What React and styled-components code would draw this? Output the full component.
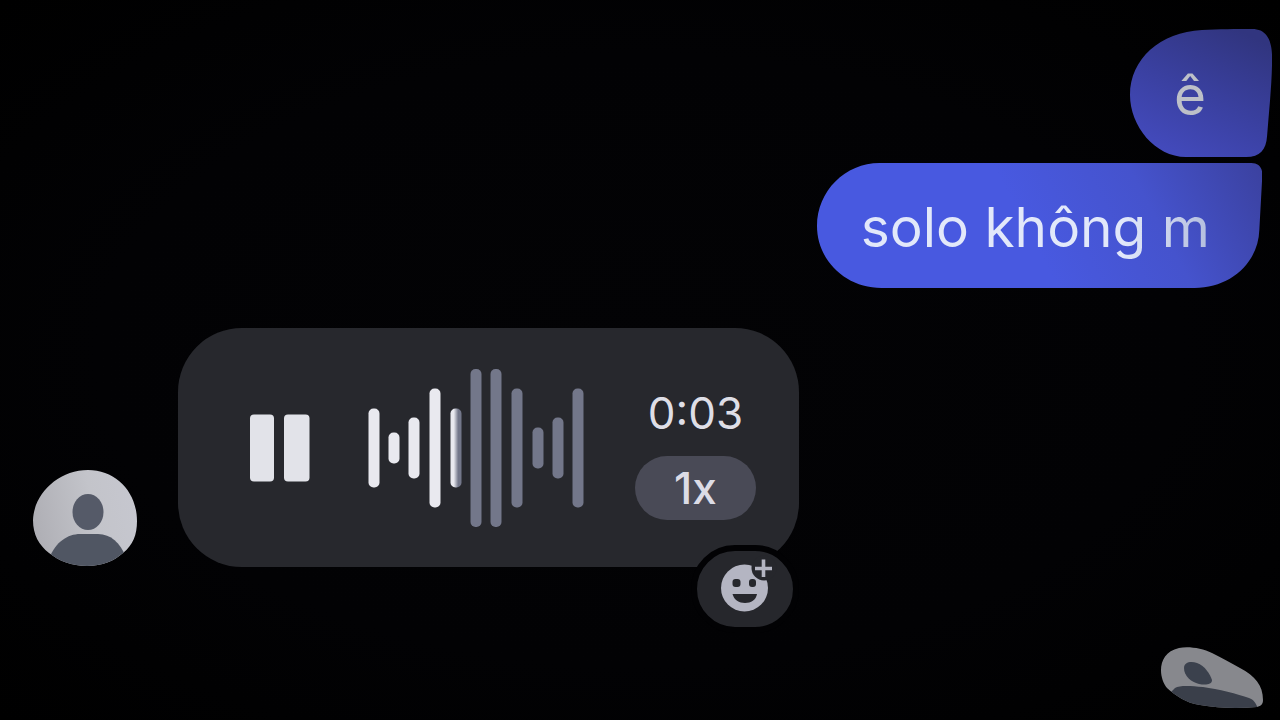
import React from 'react';
import styled, { createGlobalStyle } from 'styled-components';

const GlobalStyle = createGlobalStyle`
  * {
    box-sizing: border-box;
  }
  body {
    margin: 0;
    background: #010102;
    font-family: Inter, "Liberation Sans", sans-serif;
  }
  button {
    border: 0;
    padding: 0;
    font-family: inherit;
    cursor: pointer;
  }
`;

const Thread = styled.main`
  display: flex;
  flex-direction: column;
  min-height: 100vh;
  padding: 28px 8px 8px 32px;
  background: radial-gradient(ellipse at center, #030305 0%, #020204 60%, #000 100%);
`;

const SentGroup = styled.section`
  display: flex;
  flex-direction: column;
  align-items: flex-end;
  gap: 4px;
`;

const Bubble = styled.div`
  position: relative;
  display: flex;
  align-items: center;
  min-height: ${props => props.$height}px;
  margin-right: ${props => props.$inset}px;
  padding: 4px ${props => props.$padRight}px 0 44px;
`;

const BubbleShape = styled.svg`
  position: absolute;
  inset: 0;
  width: 100%;
  height: 100%;
`;

const BubbleText = styled.p`
  position: relative;
  margin: 0;
  font-size: 55px;
  line-height: 68px;
  color: transparent;
  background: ${props => props.$ink};
  background-clip: text;
`;

const ReceivedRow = styled.section`
  display: flex;
  align-items: flex-end;
  gap: 40px;
  margin-top: 40px;
`;

const Avatar = styled.svg`
  display: block;
  flex: none;
`;

const VoiceCard = styled.article`
  position: relative;
  display: flex;
  align-items: center;
  padding: 40px 43px 39px 71px;
  border-radius: 64px;
  background: #27282d;
`;

const PauseButton = styled.button`
  display: flex;
  margin-right: 58px;
  background: none;
`;

const Wave = styled.svg`
  display: block;
  margin-right: 51px;
`;

const Side = styled.div`
  display: flex;
  flex-direction: column;
  align-items: center;
  gap: 15px;
  padding-top: 8px;
`;

const Time = styled.time`
  font-size: 44px;
  line-height: 56px;
  color: #dedee6;
`;

const SpeedButton = styled.button`
  width: 121px;
  height: 64px;
  border-radius: 32px;
  background: #494a56;
  color: #dcdce6;
  font-size: 44px;
  font-weight: 500;
  line-height: 64px;
`;

const ReactButton = styled.button`
  position: absolute;
  right: 0;
  bottom: -66px;
  display: flex;
  width: 108px;
  height: 88px;
  border: 6px solid #020204;
  border-radius: 46px;
  background: #26272c;
`;

const Seen = styled.footer`
  display: flex;
  justify-content: flex-end;
  margin-top: 80px;
  padding-right: 8px;
`;

const bars = [
  { x: 5, h: 79, played: true },
  { x: 25, h: 31, played: true },
  { x: 45, h: 61, played: true },
  { x: 66, h: 119, played: true },
  { x: 87, h: 79, half: true },
  { x: 107, h: 158 },
  { x: 127, h: 158 },
  { x: 148, h: 119 },
  { x: 169, h: 41 },
  { x: 189, h: 61 },
  { x: 209, h: 119 },
];

const barFill = (bar) => {
  if (bar.half) return 'url(#half)';
  return bar.played ? '#e9e9ef' : '#73778a';
};

const WaveForm = () => (
  <Wave width="216" height="160" viewBox="-1 0 216 160" aria-hidden="true">
    <defs>
      <linearGradient id="half">
        <stop offset="0.3" stopColor="#e9e9ef" />
        <stop offset="0.7" stopColor="#73778a" />
      </linearGradient>
    </defs>
    {bars.map(bar => (
      <rect
        key={bar.x}
        x={bar.x - 5.5}
        y={80 - bar.h / 2}
        width="11"
        height={bar.h}
        rx="5"
        fill={barFill(bar)}
      />
    ))}
  </Wave>
);

const App = () => (
  <>
    <GlobalStyle />
    <Thread>
      <SentGroup>
        <Bubble $height={130} $inset={0} $padRight={66}>
          <BubbleShape viewBox="0 0 142 130" preserveAspectRatio="none" aria-hidden="true">
            <defs>
              <linearGradient id="first" x1="0.2" y1="1" x2="0.75" y2="0">
                <stop offset="0" stopColor="#444bbf" />
                <stop offset="0.5" stopColor="#3a40a0" />
                <stop offset="1" stopColor="#31357f" />
              </linearGradient>
            </defs>
            <path
              d="M72 2C88 1 107 1 122 1C136 1 142 11 142 30C142 55 139 82 137 108C136 122 130 129 116 129L56 129C25 129 0 98 0 67C0 31 30 4 72 2Z"
              fill="url(#first)"
            />
          </BubbleShape>
          <BubbleText $ink="#bdc0c8">ê</BubbleText>
        </Bubble>
        <Bubble $height={126} $inset={10} $padRight={52}>
          <BubbleShape viewBox="0 0 441 126" preserveAspectRatio="none" aria-hidden="true">
            <defs>
              <linearGradient id="second" gradientUnits="userSpaceOnUse" x1="230" y1="110" x2="440" y2="0">
                <stop offset="0" stopColor="#4859e0" />
                <stop offset="0.5" stopColor="#4553cd" />
                <stop offset="1" stopColor="#3b419f" />
              </linearGradient>
            </defs>
            <path
              d="M62 1L430 1C437 1 441 5 441 13L438 68C437 101 409 126 374 126L64 126C28 126 0 98 0 64C0 29 28 1 62 1Z"
              fill="url(#second)"
            />
          </BubbleShape>
          <BubbleText $ink="linear-gradient(90deg, #e2e8fa 75%, #b4bede 100%)">solo không m</BubbleText>
        </Bubble>
      </SentGroup>

      <ReceivedRow>
        <Avatar width="106" height="98" viewBox="0 0 106 98" role="img" aria-label="Contact">
          <defs>
            <clipPath id="face">
              <path d="M56 1C84 1 105 23 105 52C105 66 101 76 91 84C82 92 70 97 55 97C40 97 27 92 17 84C7 76 1 66 1 51C2 24 27 1 56 1Z" />
            </clipPath>
            <linearGradient id="skin" x1="0" x2="1" y1="0.6" y2="0.4">
              <stop offset="0" stopColor="#aeaeb4" />
              <stop offset="0.6" stopColor="#c3c4ca" />
              <stop offset="1" stopColor="#c6c7cf" />
            </linearGradient>
          </defs>
          <g clipPath="url(#face)">
            <rect width="106" height="98" fill="url(#skin)" />
            <ellipse cx="56" cy="43" rx="15.5" ry="18" fill="#555a68" />
            <path d="M17 90C23 73 36 65 48 65L66 65C79 65 88 74 94 88L90 98L20 98Z" fill="#505663" />
          </g>
        </Avatar>

        <VoiceCard>
          <PauseButton aria-label="Pause">
            <svg width="61" height="68" viewBox="0 0 61 68">
              <rect x="1" y="0.5" width="24" height="67" rx="4" fill="#e2e3e9" />
              <rect x="35" y="0.5" width="25.5" height="67" rx="4" fill="#e2e3e9" />
            </svg>
          </PauseButton>
          <WaveForm />
          <Side>
            <Time>0:03</Time>
            <SpeedButton>1x</SpeedButton>
          </Side>
          <ReactButton aria-label="Add reaction">
            <svg width="96" height="76" viewBox="0 0 96 76">
              <circle cx="47.5" cy="37" r="23.5" fill="#b4b5c2" />
              <circle cx="67" cy="17" r="12.5" fill="#26272c" />
              <path d="M66.500 8.500V26M58 17.500H75" stroke="#b4b5c2" strokeWidth="3.600" />
              <rect x="35.500" y="28" width="8" height="8" rx="3" fill="#26272c" />
              <rect x="52" y="28" width="7" height="8" rx="3" fill="#26272c" />
              <path d="M35.500 43H60C59 49 54 52 48 52C42 52 37 49 35.500 43Z" fill="#26272c" />
            </svg>
          </ReactButton>
        </VoiceCard>
      </ReceivedRow>

      <Seen>
        <Avatar width="106" height="62" viewBox="0 0 106 62" role="img" aria-label="Seen">
          <defs>
            <clipPath id="seen">
              <path d="M21 1C30 -1 44 1 54 6C64 11 73 16 82 21C97 29 105 38 105 53C105 57 103 59 99 60C78 62 60 61 42 58C28 56 18 49 9 41C0 30 -1 6 21 1Z" />
            </clipPath>
          </defs>
          <g clipPath="url(#seen)">
            <rect width="106" height="62" fill="#87888d" />
            <path d="M26 21C26 15 33 14 39 16C47 19 52 27 54 33C54 38 47 38 41 37C33 35 26 29 26 21Z" fill="#3b414d" />
            <path d="M12 46L17 41C22 38 33 39 45 40C60 42 80 47 91 51C96 53 98 56 100 62L30 62Z" fill="#3a3f4a" />
          </g>
        </Avatar>
      </Seen>
    </Thread>
  </>
);

export default App;
